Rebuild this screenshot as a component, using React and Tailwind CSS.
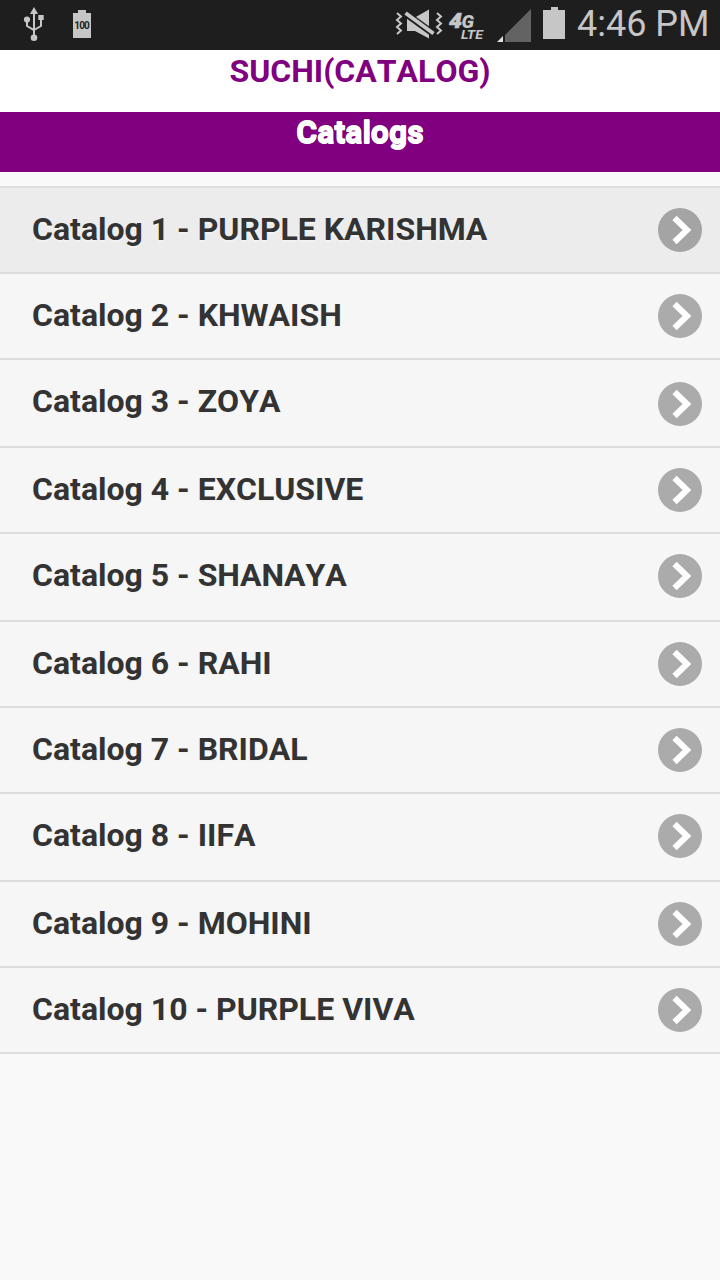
const catalogs = [
  { id: 1, name: "PURPLE KARISHMA", height: "h-[86px]", active: true },
  { id: 2, name: "KHWAISH", height: "h-[86px]" },
  { id: 3, name: "ZOYA", height: "h-[88px]", iconTop: "mt-[22px]" },
  { id: 4, name: "EXCLUSIVE", height: "h-[86px]" },
  { id: 5, name: "SHANAYA", height: "h-[88px]" },
  { id: 6, name: "RAHI", height: "h-[86px]" },
  { id: 7, name: "BRIDAL", height: "h-[86px]" },
  { id: 8, name: "IIFA", height: "h-[88px]" },
  { id: 9, name: "MOHINI", height: "h-[86px]" },
  { id: 10, name: "PURPLE VIVA", height: "h-[88px]", last: true },
];

function UsbIcon() {
  return (
    <svg width="22" height="36" viewBox="0 0 22 36" className="ml-[23px] mt-[6px] shrink-0" fill="#c6c6c6">
      <path d="M11 1l4 7H7z" />
      <circle cx="4" cy="13.5" r="3.1" />
      <rect x="15.3" y="9" width="5.4" height="5" />
      <circle cx="11" cy="31.7" r="3.3" />
      <path d="M11 6v25M4 14v6l7 4.2M18 13v7l-7 4" fill="none" stroke="#c6c6c6" strokeWidth="2" />
    </svg>
  );
}

function BatteryLevelIcon() {
  return (
    <svg width="18" height="28" viewBox="0 0 18 28" className="ml-[28px] mt-[10px] shrink-0">
      <path d="M5 0h8v3h5v25H0V3h5z" fill="#c6c6c6" />
      <text x="9" y="19" textAnchor="middle" fontFamily="Roboto, sans-serif" fontWeight="700" fontSize="10" textLength="15.5" fill="#1e1e1e">
        100
      </text>
    </svg>
  );
}

function VibrateMuteIcon() {
  return (
    <svg width="48" height="32" viewBox="0 0 48 32" className="mt-[8px] shrink-0">
      <path d="M12 10h7L34 1.5v29L20 23h-8z" fill="#c6c6c6" />
      <path d="M7 3l34 24.500" stroke="#1e1e1e" strokeWidth="7" />
      <path d="M10.500 5l28 20.500" stroke="#c6c6c6" strokeWidth="3.800" />
      <path
        d="M2 5l4 3.500L2 12l4 3.500L2 19l4 3.500L2 26M42 5l4 3.500L42 12l4 3.500L42 19l4 3.500L42 26"
        fill="none"
        stroke="#c6c6c6"
        strokeWidth="2"
      />
    </svg>
  );
}

function LteIcon() {
  return (
    <svg
      width="38"
      height="32"
      viewBox="0 0 38 32"
      className="ml-[5px] mt-[9px] shrink-0"
      fill="#c6c6c6"
      fontFamily="Roboto, sans-serif"
      fontWeight="900"
      fontStyle="italic"
    >
      <text x="1" y="18.5" fontSize="21" textLength="13" lengthAdjust="spacingAndGlyphs" stroke="#c6c6c6" strokeWidth="0.6">4</text>
      <text x="13.5" y="18.500" fontSize="18" textLength="12.500" lengthAdjust="spacingAndGlyphs">G</text>
      <text x="13" y="30" fontSize="13.500" fontWeight="700" textLength="22" lengthAdjust="spacingAndGlyphs">LTE</text>
    </svg>
  );
}

function StatusBar() {
  return (
    <div className="flex h-[50px] items-start bg-[#1e1e1e]">
      <UsbIcon />
      <BatteryLevelIcon />
      <div className="ml-auto flex items-start">
        <VibrateMuteIcon />
        <LteIcon />
        <svg width="36" height="34" viewBox="0 0 36 34" className="ml-[11px] mt-[8px] shrink-0">
          <path d="M34 1v33H8V27z" fill="#636363" />
          <path d="M6 28v6H0z" fill="#e0e0e0" />
        </svg>
        <svg width="22" height="32" viewBox="0 0 22 32" className="ml-[10px] mt-[7px] shrink-0">
          <path d="M8 0h7v3h7v29H0V3h8z" fill="#c6c6c6" />
        </svg>
        <span className="ml-[12px] mt-[3px] w-[143px] whitespace-nowrap text-[36px] leading-[42px] text-[#c6c6c6]">
          4:46 PM
        </span>
      </div>
    </div>
  );
}

function CatalogRow({ catalog }) {
  return (
    <li
      className={`flex items-start justify-between border-t-2 border-[#dddddd] pl-8 pr-[18px] ${catalog.height} ${
        catalog.active ? "bg-[#ececec]" : "bg-[#f6f6f6]"
      } ${catalog.last ? "border-b-2" : ""}`}
    >
      <span className="mt-[20px] whitespace-nowrap text-[32px] font-bold leading-[42px] text-[#333333] [font-kerning:none] [text-shadow:0_2px_0_#f3f3f3]">
        Catalog {catalog.id} - {catalog.name}
      </span>
      <svg
        width="44"
        height="44"
        viewBox="0 0 44 44"
        className={`shrink-0 ${catalog.iconTop || "mt-[20px]"}`}
      >
        <circle cx="22" cy="22" r="22" fill={catalog.active ? "#a4a4a4" : "#ababab"} />
        <path d="M16.500 10L29 22 16.500 34" fill="none" stroke="#fff" strokeWidth="6" />
      </svg>
    </li>
  );
}

export default function App() {
  return (
    <div className="flex min-h-screen flex-col bg-[#f9f9f9] font-['Roboto',sans-serif]">
      <StatusBar />
      <h1 className="h-[62px] bg-white text-center text-[32px] font-bold leading-[42px] text-[#800080] [font-kerning:none]">
        SUCHI(CATALOG)
      </h1>
      <h2 className="h-[60px] bg-[#800080] text-center text-[32px] font-bold leading-[40px] text-white [font-kerning:none] [-webkit-text-stroke:0.9px_white] [text-shadow:0_-1px_0_#fff,0_1px_0_#fff]">
        Catalogs
      </h2>
      <ul className="mt-[14px]">
        {catalogs.map((catalog) => (
          <CatalogRow key={catalog.id} catalog={catalog} />
        ))}
      </ul>
    </div>
  );
}
